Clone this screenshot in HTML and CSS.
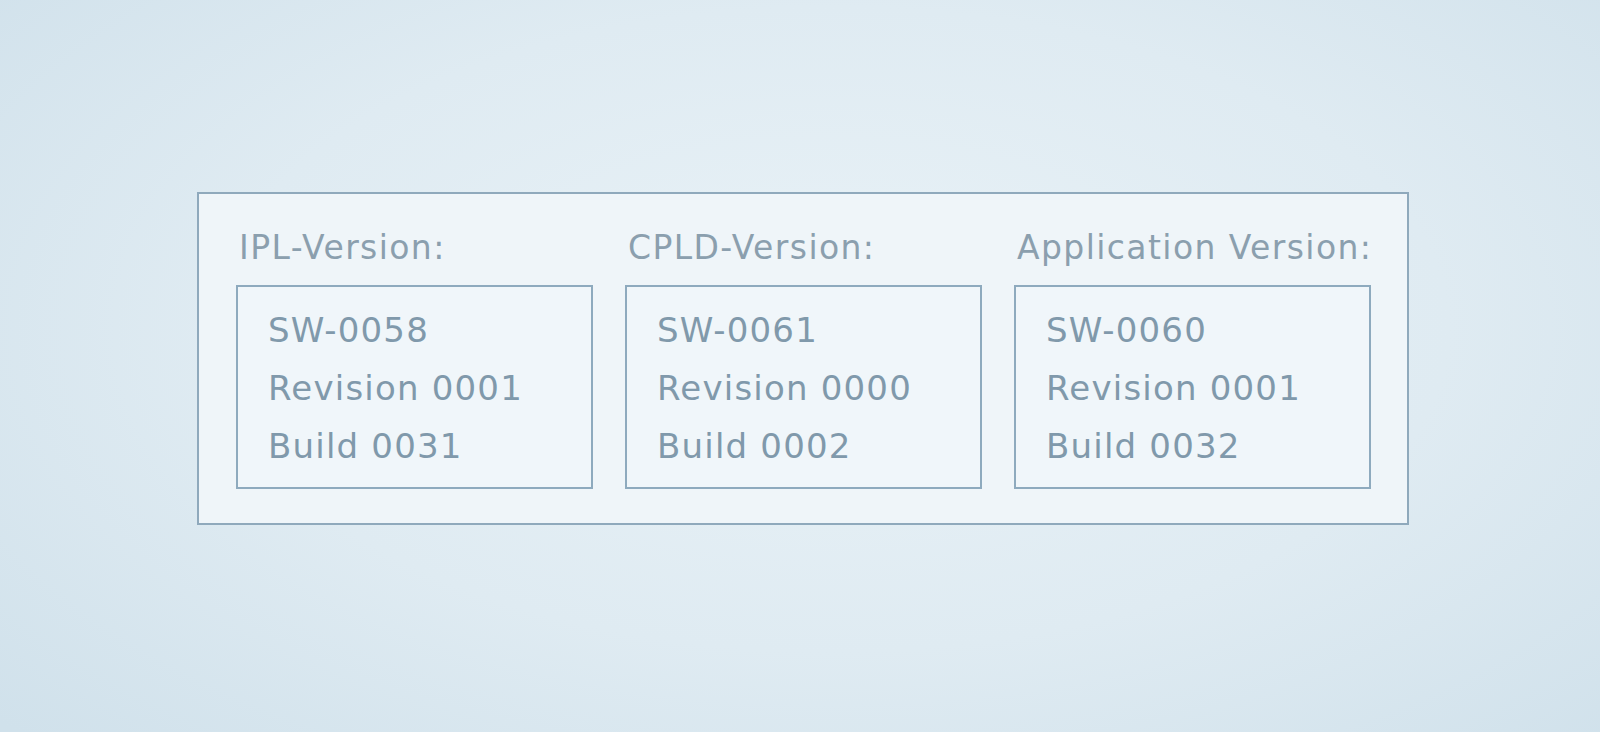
FILE: index.html
```html
<!DOCTYPE html>
<html>
  <head>
    <meta charset="UTF-8" />
    <title>Version Info</title>
    <link rel="stylesheet" href="styles.css">
  </head>
  <body>
    <div class="panel">
      <div class="version-col">
        <div class="version-label">IPL-Version:</div>
        <div class="version-box">
          <div class="line">SW-0058</div>
          <div class="line">Revision 0001</div>
          <div class="line">Build 0031</div>
        </div>
      </div>
      <div class="version-col">
        <div class="version-label">CPLD-Version:</div>
        <div class="version-box">
          <div class="line">SW-0061</div>
          <div class="line">Revision 0000</div>
          <div class="line">Build 0002</div>
        </div>
      </div>
      <div class="version-col">
        <div class="version-label">Application Version:</div>
        <div class="version-box">
          <div class="line">SW-0060</div>
          <div class="line">Revision 0001</div>
          <div class="line">Build 0032</div>
        </div>
      </div>
    </div>
  </body>
</html>
```

FILE: styles.css
```css
html, body {
  height: 100%;
}
body {
  margin: 0;
  padding: 192px 0 0 197px;
  box-sizing: border-box;
  font-family: "DejaVu Sans", sans-serif;
  background: radial-gradient(ellipse 70% 80% at 52% 45%, #e9f2f7 0%, #dfebf2 55%, #d0e1eb 100%);
}
.panel {
  width: 1212px;
  box-sizing: border-box;
  display: grid;
  grid-template-columns: repeat(3, 357px);
  column-gap: 32px;
  padding: 34px 36px 34px 37px;
  border: 2px solid #8fa9bc;
  background-color: #eff5f9;
}
.version-label {
  font-size: 33px;
  line-height: 40px;
  letter-spacing: 1.4px;
  color: #8b9fae;
  padding-left: 3px;
  margin-bottom: 17px;
  white-space: nowrap;
}
.version-box {
  border: 2px solid #8eaabe;
  padding: 14px 20px 12px 30px;
  background-color: #f0f6fa;
}
.line {
  font-size: 34px;
  line-height: 58px;
  letter-spacing: 1.2px;
  color: #8099ab;
  white-space: nowrap;
}
```
